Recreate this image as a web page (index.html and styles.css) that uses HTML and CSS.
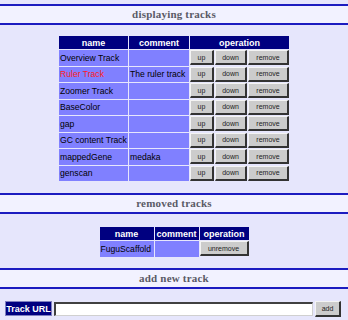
FILE: index.html
```html
<!DOCTYPE html>
<html lang="en">
<head>
  <meta charset="UTF-8">
  <title>Track configuration</title>
  <link rel="stylesheet" href="styles.css">
</head>
<body>
  <div class="section-title">displaying tracks</div>
  <table class="tracks tracks-main">
    <tr>
      <th class="col-name">name</th>
      <th class="col-comment">comment</th>
      <th class="col-op">operation</th>
    </tr>
    <tr>
      <td class="name">Overview Track</td>
      <td class="comment"></td>
      <td class="op"><div class="op-btns"><button class="btn btn-up">up</button><button class="btn btn-down">down</button><button class="btn btn-remove">remove</button></div></td>
    </tr>
    <tr>
      <td class="name ruler">Ruler Track</td>
      <td class="comment">The ruler track</td>
      <td class="op"><div class="op-btns"><button class="btn btn-up">up</button><button class="btn btn-down">down</button><button class="btn btn-remove">remove</button></div></td>
    </tr>
    <tr>
      <td class="name">Zoomer Track</td>
      <td class="comment"></td>
      <td class="op"><div class="op-btns"><button class="btn btn-up">up</button><button class="btn btn-down">down</button><button class="btn btn-remove">remove</button></div></td>
    </tr>
    <tr>
      <td class="name">BaseColor</td>
      <td class="comment"></td>
      <td class="op"><div class="op-btns"><button class="btn btn-up">up</button><button class="btn btn-down">down</button><button class="btn btn-remove">remove</button></div></td>
    </tr>
    <tr>
      <td class="name">gap</td>
      <td class="comment"></td>
      <td class="op"><div class="op-btns"><button class="btn btn-up">up</button><button class="btn btn-down">down</button><button class="btn btn-remove">remove</button></div></td>
    </tr>
    <tr>
      <td class="name">GC content Track</td>
      <td class="comment"></td>
      <td class="op"><div class="op-btns"><button class="btn btn-up">up</button><button class="btn btn-down">down</button><button class="btn btn-remove">remove</button></div></td>
    </tr>
    <tr>
      <td class="name">mappedGene</td>
      <td class="comment">medaka</td>
      <td class="op"><div class="op-btns"><button class="btn btn-up">up</button><button class="btn btn-down">down</button><button class="btn btn-remove">remove</button></div></td>
    </tr>
    <tr>
      <td class="name">genscan</td>
      <td class="comment"></td>
      <td class="op"><div class="op-btns"><button class="btn btn-up">up</button><button class="btn btn-down">down</button><button class="btn btn-remove">remove</button></div></td>
    </tr>
  </table>

  <div class="section-title">removed tracks</div>
  <table class="tracks tracks-removed">
    <tr>
      <th class="col-name2">name</th>
      <th class="col-comment2">comment</th>
      <th class="col-op2">operation</th>
    </tr>
    <tr>
      <td class="name">FuguScaffold</td>
      <td class="comment"></td>
      <td class="op"><button class="btn btn-unremove">unremove</button></td>
    </tr>
  </table>

  <div class="section-title">add new track</div>
  <form class="add-row">
    <label class="url-label" for="trackUrl">Track URL</label>
    <input class="url-input" id="trackUrl" type="text">
    <button class="btn btn-add" type="button">add</button>
  </form>
</body>
</html>
```

FILE: styles.css
```css
body {
  margin: 0;
  padding-top: 4px;
  background: #e6e6fc;
  font-family: "Liberation Sans", Arial, sans-serif;
  font-size: 8.6px;
  color: #000;
}

.section-title {
  height: 17px;
  line-height: 17px;
  border-top: 2px solid #1c1cc0;
  border-bottom: 2px solid #1c1cc0;
  background: #f2f2ff;
  text-align: center;
  font-family: "Liberation Serif", "Times New Roman", serif;
  font-weight: bold;
  font-size: 11px;
  color: #5a5a66;
  letter-spacing: 0.2px;
}

.tracks {
  margin: 0 auto;
  border-collapse: separate;
  border-spacing: 1px;
  table-layout: fixed;
}

.tracks-main {
  width: 232px;
  margin-top: 10px;
  margin-bottom: 11px;
}

.tracks-removed {
  width: 150px;
  margin-top: 12px;
  margin-bottom: 10px;
}

.tracks th {
  height: 13px;
  padding: 0;
  background: #000080;
  color: #fff;
  font-weight: bold;
  font-size: 9px;
  text-align: center;
  white-space: nowrap;
  overflow: hidden;
}

.tracks td {
  height: 15.5px;
  padding: 0;
  background: #8080ff;
  white-space: nowrap;
  overflow: hidden;
}

.tracks td.name,
.tracks td.comment {
  padding-left: 1px;
}

.tracks td.op {
  background: transparent;
}

.op-btns {
  display: flex;
  gap: 1px;
}

.col-name { width: 69px; }
.col-comment { width: 60px; }
.col-op { width: 99px; }

.col-name2 { width: 54px; }
.col-comment2 { width: 44px; }
.col-op2 { width: 49px; }

.ruler {
  color: #ff1a1a;
}

.btn {
  display: block;
  box-sizing: border-box;
  height: 15px;
  margin: 0;
  padding: 0;
  background: #cccccc;
  border: 1px solid #f4f4f4;
  border-right: 2px solid #333;
  border-bottom: 2px solid #333;
  font-family: "Liberation Sans", Arial, sans-serif;
  font-size: 7px;
  color: #222;
  text-align: center;
}

.btn-up { width: 24px; }
.btn-down { width: 32px; }
.btn-remove { width: 41px; }
.btn-unremove { width: 49px; }

.add-row {
  display: flex;
  align-items: center;
  gap: 2px;
  margin: 12px 7px 0 5px;
}

.url-label {
  box-sizing: border-box;
  width: 47px;
  height: 15px;
  line-height: 15px;
  background: #000080;
  color: #fff;
  font-weight: bold;
  font-size: 9px;
  text-align: center;
  border: 1px solid #8080c0;
}

.url-input {
  flex: 1;
  box-sizing: border-box;
  height: 14px;
  margin: 0;
  padding: 0;
  background: #fff;
  border: 1px solid #d0d0d0;
  border-top: 2px solid #404040;
  border-left: 2px solid #404040;
}

.btn-add {
  width: 26px;
  height: 16px;
}
```
